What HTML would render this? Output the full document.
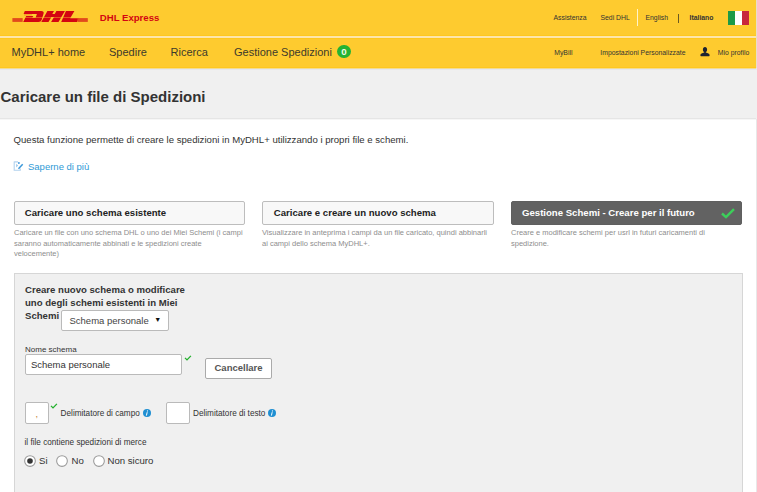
<!DOCTYPE html>
<html><head><meta charset="utf-8">
<style>
*{margin:0;padding:0;box-sizing:border-box}
html,body{width:757px;height:492px;overflow:hidden;background:#fff}
body{font-family:"Liberation Sans",sans-serif;color:#333;position:relative}
.a{position:absolute;white-space:nowrap}
#hdr{position:absolute;left:0;top:0;width:756px;height:68px;background:#fecb2f}
#hl{position:absolute;left:0;top:36px;width:756px;height:2px;background:#fde6ab}
#rcol{position:absolute;left:756px;top:0;width:1px;height:492px;background:linear-gradient(#e8dfc6 0,#e8dfc6 68px,#e6e7ee 68px,#e6e7ee 70px,#f0f0f0 70px,#f0f0f0 119px,#e8e8e8 119px)}
.top{font-size:6.85px;color:#333;line-height:1}
.nav{font-size:11px;color:#3c3a2c;line-height:1;top:47px!important}
.rnav{font-size:6.85px;color:#333;line-height:1}
#grey{position:absolute;left:0;top:70px;width:756px;height:49px;background:#f0f0f0;border-bottom:1px solid #e5e5e5}
.tab{position:absolute;top:200.6px;height:24px;border:1px solid #bdbdbd;border-radius:2px;background:#f8f8f8;font-weight:bold;font-size:9.6px;color:#222}
.desc{font-size:7.5px;color:#8e8e8e;line-height:10.35px;margin-top:0.2px}
#panel{position:absolute;left:14px;top:273px;width:729px;height:240px;background:#f0f0f0;border:1px solid #d6d6d6}
</style></head><body>
<div id="hdr"></div>
<div id="hl"></div>
<div class="a" style="left:0;top:35px;width:756px;height:1px;background:#ffc71f"></div>
<div class="a" style="left:0;top:38px;width:756px;height:1px;background:#ffc71f"></div>
<div class="a" style="left:0;top:67px;width:756px;height:1px;background:#ffc71f"></div>
<div class="a" style="left:0;top:68px;width:756px;height:1px;background:#f3dc92"></div>
<div class="a" style="left:0;top:69px;width:756px;height:1px;background:#e4e7f0"></div>

<!-- DHL logo -->
<svg class="a" style="left:0;top:0" width="100" height="30" viewBox="0 0 100 30">
  <g fill="#d40511">
    <path d="M24.8,11 H41.2 Q44.3,11 43.6,13.6 L41.6,20 Q41,21.9 38.5,21.9 H23.2 L26.2,15.9 H33.3 L32.3,17.7 H35.6 L36.9,13.9 H23.6 Z"/>
    <path d="M47.4,11 H54 L52.3,14 H54.7 L56.4,11 H64.9 L58.5,21.9 H51.1 L54,16.9 H51.4 L48.5,21.9 H41.3 Z"/>
    <path d="M65.9,11 H74.4 L70.2,18.2 H78.8 L77,21.9 H61.2 Z"/>
    <rect x="24" y="14.7" width="8" height="0.5" fill="#e8501a"/>
    <rect x="12.4" y="18.1" width="10.3" height="3.8" fill="#e24a1c"/>
    <rect x="77.4" y="18.1" width="10.4" height="3.8" fill="#e24a1c"/>
  </g>
  <rect x="23" y="17.2" width="56" height="0.8" fill="#fecb2f" opacity="0.55"/>
</svg>
<div class="a" style="left:99.8px;top:12.4px;font-size:9.6px;font-weight:bold;color:#d40511;line-height:12px">DHL Express</div>

<!-- top links -->
<div class="a top" style="left:553.5px;top:14.8px">Assistenza</div>
<div class="a top" style="left:600.5px;top:14.8px">Sedi DHL</div>
<div class="a" style="left:637px;top:9px;width:1px;height:17px;background:#fff3c8"></div>
<div class="a top" style="left:645.5px;top:14.8px">English</div>
<div class="a" style="left:678px;top:14px;width:1px;height:8.5px;background:#6b5a22"></div>
<div class="a top" style="left:689.5px;top:14.8px;font-weight:bold">Italiano</div>
<div class="a" style="left:728px;top:11px;width:21px;height:14px;display:flex">
  <div style="flex:1;background:#1d9a47"></div><div style="flex:1;background:#fff"></div><div style="flex:1;background:#c8273c"></div>
</div>

<!-- nav -->
<div class="a nav" style="left:11.5px;top:46px">MyDHL+ home</div>
<div class="a nav" style="left:109px;top:46px">Spedire</div>
<div class="a nav" style="left:170.5px;top:46px">Ricerca</div>
<div class="a nav" style="left:234px;top:46px">Gestione Spedizioni</div>
<div class="a" style="left:337px;top:44.5px;width:14px;height:13.8px;border-radius:50%;background:#24b333;color:#f2fbe8;font-size:9.8px;font-weight:bold;text-align:center;line-height:13.8px">0</div>

<div class="a rnav" style="left:554.2px;top:50px">MyBill</div>
<div class="a rnav" style="left:600.3px;top:50px">Impostazioni Personalizzate</div>
<svg class="a" style="left:700px;top:46.7px" width="10" height="10" viewBox="0 0 10 10">
  <path fill="#1f2430" d="M5,0 C6.3,0 7.1,1.1 7.1,2.5 C7.1,3.8 6.5,4.7 5.8,5.1 L5.8,5.5 C7.8,5.9 9.4,6.7 9.6,8 Q9.7,9.2 9,9.3 L1,9.3 Q0.3,9.2 0.4,8 C0.6,6.7 2.2,5.9 4.2,5.5 L4.2,5.1 C3.5,4.7 2.9,3.8 2.9,2.5 C2.9,1.1 3.7,0 5,0 Z"/>
</svg>
<div class="a rnav" style="left:717.8px;top:50px">Mio profilo</div>

<!-- grey title band -->
<div id="grey"></div>
<div id="rcol"></div>
<div class="a" style="left:0;top:119px;width:756px;height:1px;background:#f6f6f6"></div>
<div class="a" style="left:0.5px;top:88px;font-size:15px;font-weight:bold;color:#333;line-height:17px">Caricare un file di Spedizioni</div>

<div class="a" style="left:13.5px;top:134px;font-size:9.6px;color:#333;line-height:11px">Questa funzione permette di creare le spedizioni in MyDHL+ utilizzando i propri file e schemi.</div>

<svg class="a" style="left:13px;top:161px" width="11" height="10" viewBox="0 0 11 10">
  <path d="M1.2,0.9 H5 M1.2,0.6 V9.3 H7.3 V7.6" fill="none" stroke="#b3d2ee" stroke-width="1.1"/>
  <circle cx="5.9" cy="2.0" r="0.9" fill="#3a94d8"/>
  <path d="M3.3,2.8 L4.9,4.6 L3.3,6.4 Z" fill="#80b9e6"/>
  <path d="M9.7,3.2 L5.5,7.7" stroke="#3896d8" stroke-width="1.5"/>
</svg>
<div class="a" style="left:28px;top:160.7px;font-size:9.5px;color:#2f9ad6;line-height:11px">Saperne di più</div>

<!-- tabs -->
<div class="tab" style="left:14px;width:231px"><span class="a" style="left:9.8px;top:5px;line-height:12px">Caricare uno schema esistente</span></div>
<div class="a desc" style="left:14px;top:228px;white-space:normal;width:235px">Caricare un file con uno schema DHL o uno dei Miei Schemi (i campi<br>saranno automaticamente abbinati e le spedizioni create<br>velocemente)</div>

<div class="tab" style="left:262px;width:232px"><span class="a" style="left:10.8px;top:5px;line-height:12px">Caricare e creare un nuovo schema</span></div>
<div class="a desc" style="left:262px;top:228px">Visualizzare in anteprima i campi da un file caricato, quindi abbinarli<br>ai campi dello schema MyDHL+.</div>

<div class="tab" style="left:511px;width:231px;background:#626262;border-color:#5f5f5f;color:#fff"><span class="a" style="left:10px;top:5px;line-height:12px">Gestione Schemi - Creare per il futuro</span>
<svg class="a" style="left:209px;top:6px" width="14" height="11" viewBox="0 0 14 11"><path d="M1 5.5 L5 9.2 L13 1.2" fill="none" stroke="#3ccf5a" stroke-width="2.4"/></svg></div>
<div class="a desc" style="left:511px;top:228px">Creare e modificare schemi per usrl in futuri caricamenti di<br>spedizione.</div>

<!-- panel -->
<div id="panel"></div>
<div class="a" style="left:25px;top:284px;font-size:9.6px;font-weight:bold;color:#333;line-height:12.8px;white-space:nowrap">Creare nuovo schema o modificare<br>uno degli schemi esistenti in Miei<br>Schemi</div>
<div class="a" style="left:61px;top:310px;width:108px;height:20.8px;background:#fff;border:1px solid #bababa;border-radius:2px;font-size:9.5px;color:#444">
  <span class="a" style="left:7.5px;top:4px;line-height:11px">Schema personale</span>
  <span class="a" style="left:92.3px;top:4.3px;font-size:7px;line-height:9px;color:#111">&#9660;</span>
</div>

<div class="a" style="left:25px;top:344.5px;font-size:8px;color:#333;line-height:10px">Nome schema</div>
<div class="a" style="left:25px;top:354px;width:157px;height:21px;background:#fff;border:1px solid #bababa;border-radius:2px"><span class="a" style="left:4.9px;top:4px;font-size:9.5px;color:#333;line-height:11px">Schema personale</span></div>
<svg class="a" style="left:184px;top:355px" width="8" height="6" viewBox="0 0 8 6"><path d="M1.0 2.9 L3.0 4.9 L6.9 0.9" fill="none" stroke="#22b02c" stroke-width="1.3"/></svg>
<div class="a" style="left:205px;top:358px;width:67px;height:21px;background:#fff;border:1px solid #aaa;border-radius:2px"><span class="a" style="left:8.5px;top:3px;font-size:9.5px;font-weight:bold;color:#555;line-height:11px">Cancellare</span></div>

<div class="a" style="left:24.5px;top:402px;width:24.5px;height:21.5px;background:#fff;border:1px solid #bababa;border-radius:2px"><span class="a" style="left:10px;top:6px;font-size:9px;color:#c07a2a;line-height:11px">,</span></div>
<svg class="a" style="left:50px;top:403.2px" width="8" height="6" viewBox="0 0 8 6"><path d="M1.0 2.9 L3.0 4.9 L6.9 0.9" fill="none" stroke="#22b02c" stroke-width="1.3"/></svg>
<div class="a" style="left:60.6px;top:408.7px;font-size:8.2px;color:#333;line-height:10px">Delimitatore di campo</div>
<svg class="a" style="left:143px;top:408.7px" width="8" height="8" viewBox="0 0 8 8"><circle cx="4" cy="4" r="4" fill="#1f8fd2"/><path d="M4.2,3.2 L3.4,6.6" stroke="#fff" stroke-width="1"/><circle cx="4.45" cy="1.9" r="0.6" fill="#fff"/></svg>

<div class="a" style="left:165.5px;top:402px;width:24.5px;height:21.5px;background:#fff;border:1px solid #bababa;border-radius:2px"></div>
<div class="a" style="left:193px;top:408.7px;font-size:8.2px;color:#333;line-height:10px">Delimitatore di testo</div>
<svg class="a" style="left:268px;top:408.7px" width="8" height="8" viewBox="0 0 8 8"><circle cx="4" cy="4" r="4" fill="#1f8fd2"/><path d="M4.2,3.2 L3.4,6.6" stroke="#fff" stroke-width="1"/><circle cx="4.45" cy="1.9" r="0.6" fill="#fff"/></svg>

<div class="a" style="left:24.5px;top:437.7px;font-size:8.2px;color:#333;line-height:10px">il file contiene spedizioni di merce</div>

<svg class="a" style="left:24px;top:455px" width="12" height="12" viewBox="0 0 12 12"><circle cx="6" cy="6" r="5.35" fill="#fff" stroke="#9a9a9a" stroke-width="1.05"/><circle cx="6" cy="6" r="2.8" fill="#333"/></svg>
<div class="a" style="left:39px;top:455.4px;font-size:9.6px;color:#333;line-height:11px">Si</div>
<svg class="a" style="left:56px;top:455px" width="12" height="12" viewBox="0 0 12 12"><circle cx="6" cy="6" r="5.35" fill="#fff" stroke="#9a9a9a" stroke-width="1.05"/></svg>
<div class="a" style="left:71.5px;top:455.4px;font-size:9.6px;color:#333;line-height:11px">No</div>
<svg class="a" style="left:93px;top:455px" width="12" height="12" viewBox="0 0 12 12"><circle cx="6" cy="6" r="5.35" fill="#fff" stroke="#9a9a9a" stroke-width="1.05"/></svg>
<div class="a" style="left:107.5px;top:455.4px;font-size:9.6px;color:#333;line-height:11px">Non sicuro</div>

</body></html>
